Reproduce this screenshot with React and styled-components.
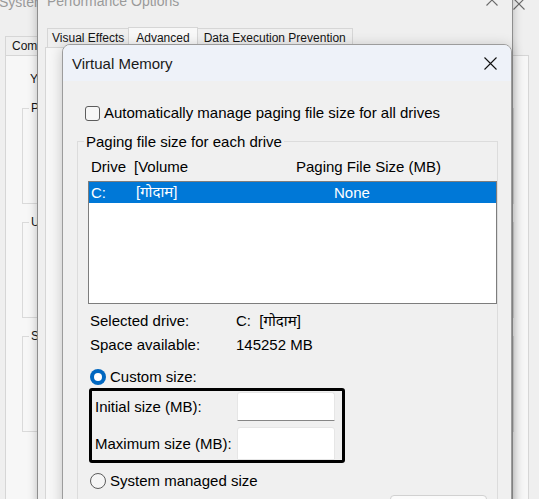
import React from 'react';
import styled, { createGlobalStyle } from 'styled-components';

const FONT = `"Liberation Sans", Arial, "Noto Sans Devanagari", "Lohit Devanagari", "FreeSans", "Noto Sans", sans-serif`;

const Global = createGlobalStyle`
  html, body { margin: 0; padding: 0; }
  body {
    width: 539px; height: 499px; overflow: hidden; background: #efefef;
    font-family: ${FONT};
    -webkit-font-smoothing: antialiased;
  }
  * { box-sizing: border-box; }
`;

const Desktop = styled.div`
  position: relative;
  width: 539px;
  height: 499px;
  overflow: hidden;
  background: #efefef;
`;

/* ---------- generic window chrome ---------- */
const TitleBar = styled.div`
  display: flex;
  align-items: flex-start;
  height: ${p => p.$h}px;
  flex-shrink: 0;
`;
const TitleText = styled.div`
  flex: 1;
  padding: ${p => p.$pt}px 0 0 ${p => p.$pl}px;
  font-size: 14px;
  line-height: 16px;
  color: #9a9a9a;
  white-space: nowrap;
  overflow: hidden;
`;
const CloseBtn = styled.div`
  width: ${p => p.$w}px;
  margin: ${p => p.$mt}px ${p => p.$mr || 0}px 0 0;
  display: flex;
  justify-content: center;
  flex-shrink: 0;
`;
const XIcon = ({ size = 12, color = '#000' }) => (
  <svg width={size} height={size} viewBox={`0 0 ${size} ${size}`}>
    <path
      d={`M0.5 0.5L${size - 0.5} ${size - 0.5}M${size - 0.5} 0.5L0.5 ${size - 0.5}`}
      stroke={color}
      strokeWidth="1.1"
      fill="none"
    />
  </svg>
);

const TabStrip = styled.div`
  display: flex;
  align-items: flex-end;
  height: ${p => p.$h}px;
  padding-left: ${p => p.$pl}px;
  flex-shrink: 0;
  position: relative;
  z-index: 1;
`;
const Tab = styled.div`
  height: ${p => (p.$active ? p.$h + 2 : p.$h)}px;
  padding: 0 ${p => p.$px}px;
  display: flex;
  align-items: center;
  font-size: 12px;
  color: #141414;
  white-space: nowrap;
  border: 1px solid #d6d6d6;
  border-bottom: none;
  margin-right: -1px;
  margin-bottom: ${p => (p.$active ? '-1px' : '0')};
  background: ${p => (p.$active ? '#f8f8f8' : '#efefef')};
  position: relative;
  z-index: ${p => (p.$active ? 1 : 0)};
`;
const TabPanel = styled.div`
  flex: 1;
  margin: ${p => p.$m};
  border: 1px solid #d6d6d6;
  background: #f7f7f7;
  display: flex;
  flex-direction: column;
  padding: ${p => p.$pad};
`;

/* ---------- System Properties (back window) ---------- */
const SysWindow = styled.div`
  position: absolute;
  z-index: 1;
  left: -14px;
  top: -22px;
  width: 559px;
  height: 560px;
  background: #efefef;
  display: flex;
  flex-direction: column;
`;
const SysText = styled.div`
  font-size: 12px;
  line-height: 15px;
  color: #141414;
  padding-left: 8px;
  white-space: nowrap;
`;
const SysGroup = styled.fieldset`
  margin: ${p => p.$mt}px 0 0 0;
  height: 103px;
  border: 1px solid #dadada;
  padding: 0 0 0 6px;
  flex-shrink: 0;
`;
const SysLegend = styled.legend`
  font-size: 12px;
  line-height: 14px;
  padding: 0 2px;
  color: #141414;
`;

/* ---------- Performance Options (middle window) ---------- */
const PerfWindow = styled.div`
  position: absolute;
  z-index: 2;
  left: 37px;
  top: -20px;
  width: 476px;
  height: 560px;
  background: #efefef;
  border: 1px solid #8e8e8e;
  box-shadow: 0 0 9px rgba(0, 0, 0, 0.24);
  display: flex;
  flex-direction: column;
`;

/* ---------- Virtual Memory (front dialog) ---------- */
const VMDialog = styled.div`
  position: absolute;
  z-index: 3;
  left: 62px;
  top: 44px;
  width: 450px;
  height: 490px;
  border: 1px solid #9c9c9c;
  border-radius: 8px 8px 0 0;
  background: #f0f0f0;
  box-shadow: 0 2px 14px rgba(0, 0, 0, 0.2);
  display: flex;
  flex-direction: column;
  overflow: hidden;
  font-size: 15px;
  color: #000;
`;
const VMTitle = styled.div`
  height: 36px;
  flex-shrink: 0;
  background: #eef2f9;
  display: flex;
  align-items: center;
`;
const VMTitleText = styled.div`
  flex: 1;
  padding-left: 9px;
  font-size: 15px;
  color: #1a1a1a;
`;
const VMClose = styled.div`
  width: 42px;
  height: 36px;
  display: flex;
  align-items: center;
  justify-content: center;
`;
const VMBody = styled.div`
  flex: 1;
  padding: 24px 0 0 14px;
  display: flex;
  flex-direction: column;
`;
const CheckRow = styled.label`
  display: flex;
  align-items: center;
  gap: 4px;
  height: 16px;
  margin-left: 8px;
  line-height: 16px;
  white-space: nowrap;
`;
const CheckBox = styled.span`
  width: 15px;
  height: 15px;
  border: 1px solid #5c5c5c;
  border-radius: 3px;
  background: #f6f6f6;
  flex-shrink: 0;
`;
const Group = styled.fieldset`
  margin: 12px 0 0 0;
  width: 421px;
  min-height: 400px;
  border: 1px solid #dcdcdc;
  padding: 0 0 0 10px;
  display: flex;
  flex-direction: column;
`;
const Legend = styled.legend`
  font-size: 15px;
  line-height: 17px;
  padding: 0 2px;
  margin-left: -4px;
`;
const HeaderRow = styled.div`
  display: grid;
  grid-template-columns: 43px 162px 1fr;
  padding-left: 3px;
  margin-top: 8px;
  line-height: 17px;
  white-space: nowrap;
`;
const ListBox = styled.div`
  margin-top: 6px;
  width: 409px;
  height: 123px;
  border: 1px solid #7d7d7d;
  background: #fff;
  flex-shrink: 0;
`;
const ListRow = styled.div`
  display: grid;
  grid-template-columns: 45px 198px 1fr;
  padding-left: 2px;
  height: 21px;
  align-items: center;
  background: ${p => (p.$selected ? '#0078d7' : 'transparent')};
  color: ${p => (p.$selected ? '#fff' : '#000')};
  white-space: nowrap;
`;
const InfoGrid = styled.div`
  display: grid;
  grid-template-columns: 146px auto;
  grid-auto-rows: 18px;
  row-gap: 6px;
  margin-top: 8px;
  padding-left: 2px;
  line-height: 18px;
  white-space: pre;
`;
const RadioRow = styled.label`
  display: flex;
  align-items: center;
  gap: 4px;
  height: 16px;
  margin-top: ${p => p.$mt}px;
  padding-left: 2px;
  line-height: 16px;
  white-space: nowrap;
`;
const Radio = styled.span`
  width: 16px;
  height: 16px;
  border-radius: 50%;
  flex-shrink: 0;
  display: flex;
  align-items: center;
  justify-content: center;
  background: ${p => (p.$checked ? '#0067c0' : '#f5f5f5')};
  border: ${p => (p.$checked ? 'none' : '1px solid #5c5c5c')};
  &::after {
    content: '';
    display: ${p => (p.$checked ? 'block' : 'none')};
    width: 8px;
    height: 8px;
    border-radius: 50%;
    background: #fff;
  }
`;
const Highlight = styled.div`
  margin: 3px 0 0 1px;
  width: 256px;
  height: 75px;
  border: 3px solid #000;
  border-radius: 3px;
  padding-top: 1px;
  display: grid;
  grid-template-columns: 142px 98px;
  grid-template-rows: 29px 33px;
  row-gap: 6px;
  padding-left: 3px;
  align-items: center;
  flex-shrink: 0;
`;
const FieldLabel = styled.span`
  white-space: nowrap;
  line-height: 18px;
`;
const SizeInput = styled.div`
  align-self: stretch;
  background: #fff;
  border: 1px solid #e6e6e6;
  border-bottom: 1px solid ${p => (p.$focus ? '#868686' : '#e6e6e6')};
  border-radius: 3px 3px 0 0;
`;
const ButtonRow = styled.div`
  display: flex;
  justify-content: flex-end;
  padding-right: 10px;
  margin-top: 6px;
`;
const Button = styled.div`
  width: 97px;
  height: 28px;
  border: 1px solid #d1d1d1;
  border-radius: 4px;
  background: #fbfbfb;
  display: flex;
  align-items: center;
  justify-content: center;
  font-size: 15px;
`;

export default function App() {
  return (
    <Desktop>
      <Global />

      <SysWindow>
        <TitleBar $h={58}>
          <TitleText $pt={16} $pl={13}>System Properties</TitleText>
          <CloseBtn $w={46} $mt={20} $mr={3}>
            <XIcon size={12} color="#6a6a6a" />
          </CloseBtn>
        </TitleBar>
        <TabStrip $h={19} $pl={19}>
          <Tab $h={19} $px={6}>Computer Name</Tab>
          <Tab $h={19} $px={6}>Hardware</Tab>
          <Tab $h={17} $px={6} $active>Advanced</Tab>
          <Tab $h={19} $px={6}>System Protection</Tab>
          <Tab $h={19} $px={6}>Remote</Tab>
        </TabStrip>
        <TabPanel $m="0 16px 0 19px" $pad="16px 14px 0 16px">
          <SysText>You must be logged on as an Administrator to make most of these changes.</SysText>
          <SysGroup $mt={14}>
            <SysLegend>Performance</SysLegend>
          </SysGroup>
          <SysGroup $mt={11}>
            <SysLegend>User Profiles</SysLegend>
          </SysGroup>
          <SysGroup $mt={11}>
            <SysLegend>Startup and Recovery</SysLegend>
          </SysGroup>
        </TabPanel>
      </SysWindow>

      <PerfWindow>
        <TitleBar $h={45}>
          <TitleText $pt={12} $pl={9}>Performance Options</TitleText>
          <CloseBtn $w={40} $mt={13}>
            <XIcon size={12} color="#6a6a6a" />
          </CloseBtn>
        </TitleBar>
        <TabStrip $h={21} $pl={9}>
          <Tab $h={19} $px={4}>Visual Effects</Tab>
          <Tab $h={19} $px={7} $active>Advanced</Tab>
          <Tab $h={19} $px={6}>Data Execution Prevention</Tab>
        </TabStrip>
        <TabPanel $m="0 6px 0 7px" $pad="0" />
      </PerfWindow>

      <VMDialog>
        <VMTitle>
          <VMTitleText>Virtual Memory</VMTitleText>
          <VMClose>
            <XIcon size={13} color="#111" />
          </VMClose>
        </VMTitle>
        <VMBody>
          <CheckRow>
            <CheckBox />
            Automatically manage paging file size for all drives
          </CheckRow>
          <Group>
            <Legend>Paging file size for each drive</Legend>
            <HeaderRow>
              <span>Drive</span>
              <span>[Volume</span>
              <span>Paging File Size (MB)</span>
            </HeaderRow>
            <ListBox>
              <ListRow $selected>
                <span>C:</span>
                <span>[गोदाम]</span>
                <span>None</span>
              </ListRow>
            </ListBox>
            <InfoGrid>
              <span>Selected drive:</span>
              <span>C:  [गोदाम]</span>
              <span>Space available:</span>
              <span>145252 MB</span>
            </InfoGrid>
            <RadioRow $mt={15}>
              <Radio $checked />
              Custom size:
            </RadioRow>
            <Highlight>
              <FieldLabel>Initial size (MB):</FieldLabel>
              <SizeInput $focus />
              <FieldLabel>Maximum size (MB):</FieldLabel>
              <SizeInput />
            </Highlight>
            <RadioRow $mt={10}>
              <Radio />
              System managed size
            </RadioRow>
            <ButtonRow>
              <Button>Set</Button>
            </ButtonRow>
          </Group>
        </VMBody>
      </VMDialog>
    </Desktop>
  );
}
